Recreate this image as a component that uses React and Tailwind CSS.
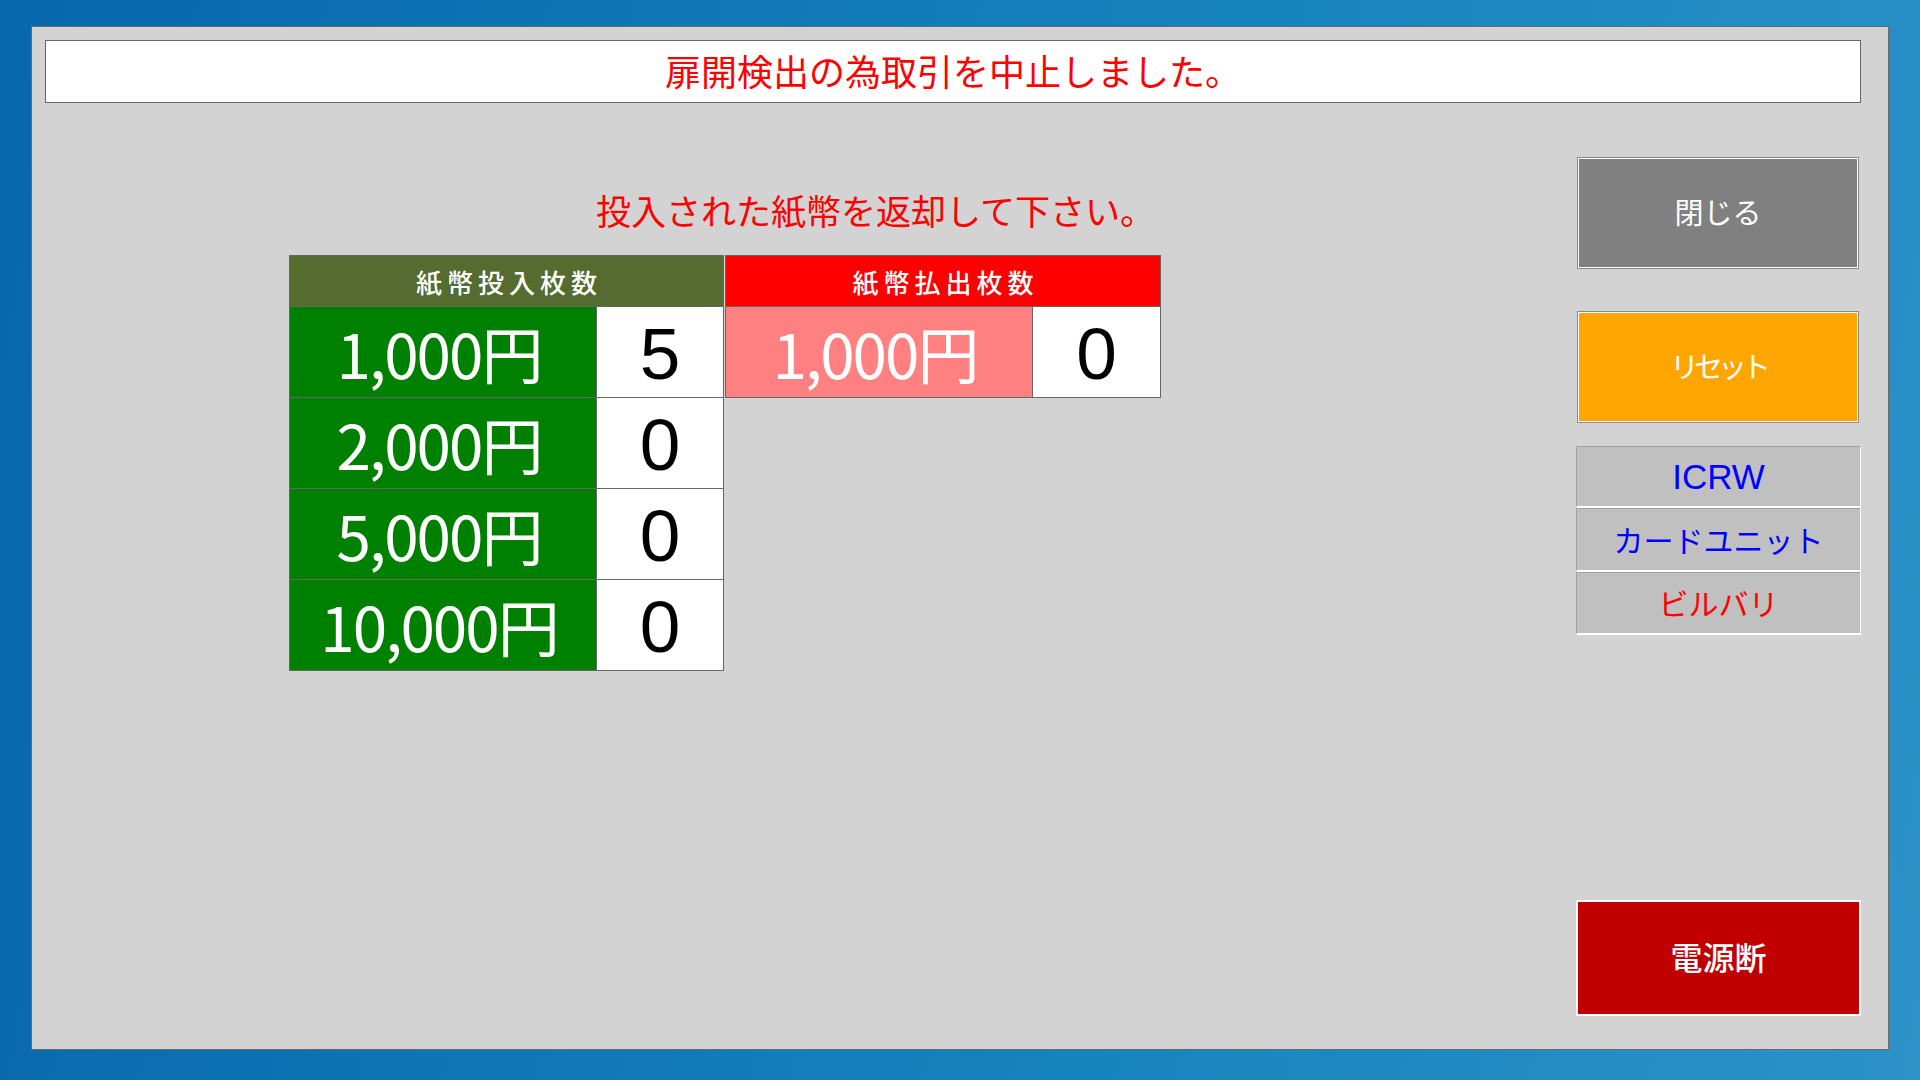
export default function App() {
  const font = { fontFamily: '"Noto Sans CJK JP", "Noto Sans", sans-serif' };
  const digitFont = { fontFamily: '"Liberation Sans", Arial, sans-serif' };
  const inRows = [
    ["1,000円", "5"],
    ["2,000円", "0"],
    ["5,000円", "0"],
    ["10,000円", "0"],
  ];
  return (
    <div
      className="w-[1920px] h-[1080px] pt-[26px] pl-[31px] bg-[linear-gradient(100deg,#0767ac_0%,#1684bd_60%,#2c92c8_100%)] overflow-hidden"
      style={font}
    >
      <div className="w-[1858px] h-[1024px] bg-[#d3d3d3] border border-[#6a6a6a] flex flex-col">
        {/* header */}
        <div className="mt-[13px] ml-[13px] w-[1816px] h-[63px] bg-white border border-[#666666] flex items-center justify-center pb-[4px] text-[#ff0000] text-[36px] leading-none">
          扉開検出の為取引を中止しました。
        </div>

        <div className="flex flex-1">
          {/* left area */}
          <div className="ml-[257px] flex flex-col">
            <div className="mt-[87px] h-[42px] pl-[307px] text-[#ff0000] text-[35px] leading-[40px] whitespace-nowrap">
              投入された紙幣を返却して下さい。
            </div>
            <div className="mt-[23px] flex gap-px items-start">
              {/* inserted table */}
              <div className="grid grid-cols-[306px_126px] gap-px p-px bg-[#666666]">
                <div className="col-span-2 h-[50px] bg-[#556b2f] text-white text-[26px] font-medium tracking-[5px] pl-[5px] flex items-center justify-center">
                  紙幣投入枚数
                </div>
                {inRows.map(([label, n]) => (
                  <div key={label} className="contents">
                    <div className="h-[90px] bg-[#008000] text-white text-[62px] tracking-[-2px] leading-none flex items-center justify-center pr-[8px]">
                      {label}
                    </div>
                    <div
                      className="h-[90px] bg-white text-black text-[73px] leading-none flex items-center justify-center pt-[2px]"
                      style={digitFont}
                    >
                      {n}
                    </div>
                  </div>
                ))}
              </div>
              {/* paid out table */}
              <div className="grid grid-cols-[306px_127px] gap-px p-px bg-[#666666]">
                <div className="col-span-2 h-[50px] bg-[#ff0000] text-white text-[26px] font-medium tracking-[5px] pl-[5px] flex items-center justify-center">
                  紙幣払出枚数
                </div>
                <div className="h-[90px] bg-[#ff8080] text-white text-[62px] tracking-[-2px] leading-none flex items-center justify-center pr-[8px]">
                  1,000円
                </div>
                <div
                  className="h-[90px] bg-white text-black text-[73px] leading-none flex items-center justify-center pt-[2px]"
                  style={digitFont}
                >
                  0
                </div>
              </div>
            </div>
          </div>

          {/* right column */}
          <div className="ml-auto mr-[27px] w-[285px] flex flex-col">
            <button className="mt-[54px] ml-px w-[282px] h-[112px] bg-[#808080] border border-[#8a8a8a] shadow-[inset_0_0_0_1px_#ffffff] text-white text-[29px] leading-none flex items-center justify-center pb-[4px]">
              閉じる
            </button>
            <button className="mt-[42px] ml-px w-[282px] h-[112px] bg-[#ffa500] border border-[#8a8a8a] shadow-[inset_0_0_0_1px_#ffffff] text-white text-[29px] tracking-[-5px] leading-none flex items-center justify-center pb-[4px]">
              リセット
            </button>
            <div className="mt-[23px] flex flex-col">
              <div
                className="h-[62px] bg-[#c0c0c0] border-t border-l border-[#a0a0a0] border-b-2 border-r border-b-white border-r-white text-[#0000ff] text-[35px] leading-none flex items-center justify-center"
                style={digitFont}
              >
                ICRW
              </div>
              <div className="h-[64px] bg-[#c0c0c0] border-t border-l border-[#a0a0a0] border-b-2 border-r border-b-white border-r-white text-[#0000ff] text-[30px] leading-none flex items-center justify-center pb-[2px]">
                カードユニット
              </div>
              <div className="h-[63px] bg-[#c0c0c0] border-t border-l border-[#a0a0a0] border-b-2 border-r border-b-white border-r-white text-[#ff0000] text-[30px] leading-none flex items-center justify-center pb-[2px]">
                ビルバリ
              </div>
            </div>
            <button className="mt-auto mb-[33px] w-[285px] h-[116px] bg-[#c00000] border-2 border-white text-white text-[32px] font-medium leading-none flex items-center justify-center pb-[4px]">
              電源断
            </button>
          </div>
        </div>
      </div>
    </div>
  );
}
